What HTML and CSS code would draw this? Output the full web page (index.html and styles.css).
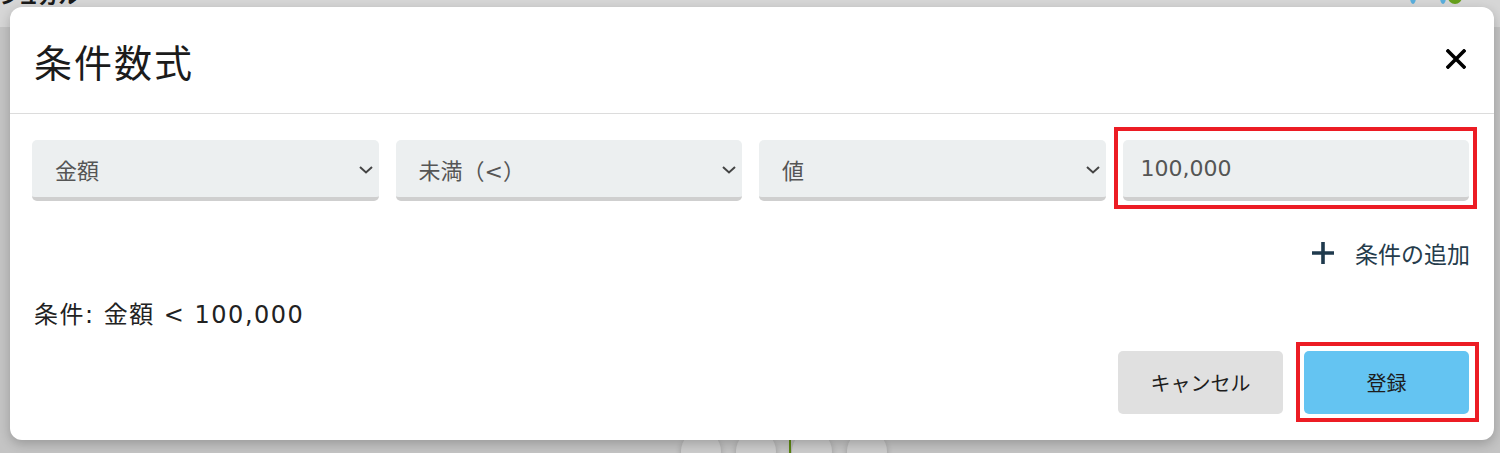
FILE: index.html
```html
<!DOCTYPE html>
<html lang="ja">
<head>
  <meta charset="UTF-8" />
  <meta name="viewport" content="width=device-width, initial-scale=1.0"/>
  <title>条件数式</title>
  <link rel="stylesheet" href="styles.css">
</head>
<body>
  <div class="page">
    <div class="appbar">
      <span class="app-name">ジュガル</span>
      <span class="bar-icons">
        <span class="dot blue"></span>
        <span class="dot blue small"></span>
        <span class="dot green"></span>
      </span>
    </div>
    <div class="steps">
      <span class="step"></span>
      <span class="step"></span>
      <span class="step-line"></span>
      <span class="step"></span>
      <span class="step"></span>
    </div>
  </div>

  <div class="modal">
    <div class="modal-header">
      <h2 class="modal-title">条件数式</h2>
      <button class="close-btn" aria-label="閉じる">
        <svg viewBox="0 0 20 20" width="20" height="20">
          <path d="M2 2 L18 18 M18 2 L2 18" stroke="#000" stroke-width="3.6" stroke-linecap="square"/>
        </svg>
      </button>
    </div>

    <div class="modal-body">
      <div class="fields">
        <div class="field">
          <span>金額</span>
          <svg class="chevron" viewBox="0 0 14 8" width="14" height="8"><path d="M1 1 L7 6.5 L13 1" fill="none" stroke="#444" stroke-width="2"/></svg>
        </div>
        <div class="field">
          <span>未満（&lt;）</span>
          <svg class="chevron" viewBox="0 0 14 8" width="14" height="8"><path d="M1 1 L7 6.5 L13 1" fill="none" stroke="#444" stroke-width="2"/></svg>
        </div>
        <div class="field">
          <span>値</span>
          <svg class="chevron" viewBox="0 0 14 8" width="14" height="8"><path d="M1 1 L7 6.5 L13 1" fill="none" stroke="#444" stroke-width="2"/></svg>
        </div>
        <div class="field marked input-mark">
          <span>100,000</span>
        </div>
      </div>

      <div class="add-row">
        <a class="add-link">
          <svg viewBox="0 0 24 24" width="24" height="24"><path d="M12 1 V23 M1 12 H23" stroke="#1f3a4d" stroke-width="3.6"/></svg>
          <span>条件の追加</span>
        </a>
      </div>

      <p class="summary">条件: 金額 &lt; 100,000</p>

      <div class="actions">
        <button class="btn btn-cancel">キャンセル</button>
        <button class="btn btn-primary marked submit-mark">登録</button>
      </div>
    </div>
  </div>
</body>
</html>
```

FILE: styles.css
```css
body {
  margin: 0;
  height: 453px;
  overflow: hidden;
  background-color: #c4c4c4;
  font-family: "DejaVu Sans", "Noto Sans CJK JP", sans-serif;
}

.page {
  height: 453px;
  display: flex;
  flex-direction: column;
}

.appbar {
  height: 27px;
  background-color: #d6d6d6;
  display: flex;
  justify-content: space-between;
  overflow: hidden;
}

.app-name {
  font-family: "Noto Sans CJK JP", sans-serif;
  font-size: 20px;
  font-weight: bold;
  color: #1a1a1a;
  line-height: 20px;
  margin-top: -14px;
}

.bar-icons {
  display: flex;
  gap: 30px;
  margin-right: 38px;
  margin-top: -10px;
}

.dot {
  width: 14px;
  height: 14px;
  border-radius: 50%;
}

.dot.blue {
  background-color: #5aaedc;
  width: 6px;
  height: 14px;
}

.dot.blue.small {
  margin-left: -6px;
}

.dot.green {
  background-color: #66a01c;
  margin-left: -28px;
}

.steps {
  margin-top: auto;
  display: flex;
  justify-content: center;
  align-items: flex-start;
  gap: 15px;
  height: 18px;
  margin-left: 68px;
}

.step {
  width: 40px;
  height: 40px;
  border-radius: 50%;
  background-color: #cdcdcd;
  box-shadow: 0 3px 6px rgba(0, 0, 0, 0.22);
  margin-top: -4px;
}

.step-line {
  width: 2px;
  height: 18px;
  background-color: #5e8a12;
  margin: 0 -14px 0 -2px;
}

.modal {
  position: absolute;
  top: 7px;
  left: 10px;
  width: 1484px;
  height: 433px;
  background-color: #fff;
  border-radius: 12px;
  box-shadow: 0 4px 12px rgba(0, 0, 0, 0.22);
  display: flex;
  flex-direction: column;
}

.modal-header {
  height: 106px;
  border-bottom: 1px solid #dcdcdc;
  display: flex;
  align-items: center;
  justify-content: space-between;
  padding: 0 28px 0 24px;
}

.modal-title {
  margin: 0;
  font-family: "Noto Sans CJK JP", sans-serif;
  font-size: 38px;
  font-weight: normal;
  color: #1b1b1b;
  letter-spacing: 2px;
}

.close-btn {
  border: none;
  background: none;
  padding: 0;
  width: 20px;
  height: 20px;
  margin-top: -2px;
}

.modal-body {
  padding: 26px 25px 0 22px;
}

.fields {
  display: grid;
  grid-template-columns: repeat(4, 1fr);
  gap: 17px;
}

.field {
  position: relative;
  height: 57px;
  background-color: #eceff0;
  border-bottom: 4px solid #cfcfcf;
  border-radius: 5px;
  display: flex;
  align-items: center;
  justify-content: space-between;
  padding: 0 6px 0 23px;
  font-size: 22px;
  color: #555;
}

.input-mark {
  padding-left: 18px;
}

.chevron {
  margin-top: 2px;
}

.marked::after {
  content: "";
  position: absolute;
  border: 4px solid #ec1c24;
  pointer-events: none;
}

.input-mark::after {
  top: -13px;
  left: -9px;
  right: -8px;
  bottom: -12px;
}

.add-row {
  display: flex;
  justify-content: flex-end;
  margin-top: 32px;
  height: 40px;
}

.add-link {
  display: flex;
  align-items: center;
  gap: 20px;
  font-size: 23px;
  color: #253c4c;
  margin-right: -1px;
}

.summary {
  margin: 27px 0 0 2px;
  height: 30px;
  font-size: 24px;
  line-height: 30px;
  letter-spacing: 1.5px;
  color: #222;
}

.actions {
  display: flex;
  justify-content: flex-end;
  gap: 21px;
  margin-top: 21px;
}

.btn {
  position: relative;
  width: 165px;
  height: 63px;
  border: none;
  border-radius: 5px;
  font-family: "Noto Sans CJK JP", sans-serif;
  font-size: 20px;
  color: #1d1d1d;
}

.btn-cancel {
  background-color: #e0e0e0;
}

.btn-primary {
  background-color: #64c4f2;
}

.submit-mark::after {
  top: -9px;
  left: -8px;
  right: -10px;
  bottom: -8px;
}
```
